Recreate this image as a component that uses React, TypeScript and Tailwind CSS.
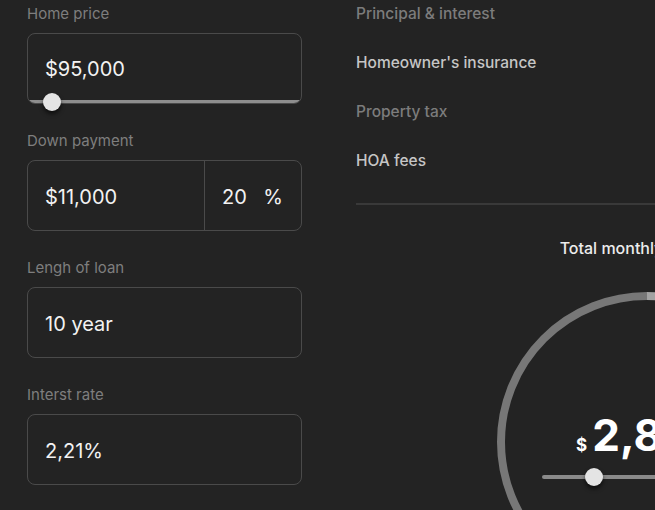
import React from "react";

const breakdown = [
  { label: "Principal & interest", tone: "text-[#7c7c7c]" },
  { label: "Homeowner's insurance", tone: "text-[#c6c6c6]" },
  { label: "Property tax", tone: "text-[#7c7c7c]" },
  { label: "HOA fees", tone: "text-[#c6c6c6]" },
];

function Field({ label, children }: { label: string; children: React.ReactNode }) {
  return (
    <div className="flex flex-col gap-[9px]">
      <span className="text-[15px] leading-[20px] text-[#7e7e7e]">{label}</span>
      {children}
    </div>
  );
}

function Box({ children }: { children: React.ReactNode }) {
  return (
    <div className="h-[71px] rounded-lg border border-[#4a4a4a] flex items-center px-[17px] pt-[3px] text-[20px] text-[#f2f2f2]">
      {children}
    </div>
  );
}

function Thumb() {
  return (
    <div className="w-[18px] h-[18px] rounded-full bg-[#e4e4e4] shadow-[0_3px_4px_rgba(0,0,0,0.6)]" />
  );
}

function Ring() {
  // donut made of payment segments
  const r = 146;
  const c = 2 * Math.PI * r;
  const segs = [
    { len: 0.28, color: "#a3a3a3" },
    { len: 0.12, color: "#5e5e5e" },
    { len: 0.1, color: "#8f8f8f" },
    { len: 0.5, color: "#777777" },
  ];
  let offset = 0;
  return (
    <svg width="300" height="300" viewBox="0 0 300 300" className="absolute inset-0">
      <g transform="rotate(-90 150 150)">
        {segs.map((s, i) => {
          const el = (
            <circle
              key={i}
              cx="150"
              cy="150"
              r={r}
              fill="none"
              stroke={s.color}
              strokeWidth="8"
              strokeDasharray={`${s.len * c} ${c}`}
              strokeDashoffset={-offset}
            />
          );
          offset += s.len * c;
          return el;
        })}
      </g>
    </svg>
  );
}

export default function App() {
  return (
    <div
      className="w-[655px] h-[510px] overflow-hidden bg-[#232323] text-white"
      style={{ fontFamily: "Inter, 'Liberation Sans', sans-serif" }}
    >
      <div className="flex gap-[54px] pl-[27px] pt-[4px]">
        {/* Inputs */}
        <div className="w-[275px] shrink-0 flex flex-col gap-[27px]">
          <Field label="Home price">
            <div className="relative">
              <div className="h-[71px] rounded-lg border border-[#4a4a4a] overflow-hidden relative flex items-center px-[17px] pt-[1px] text-[20px] text-[#f2f2f2]">
                <span>$95,000</span>
                <div className="absolute bottom-0 inset-x-0 h-[3px] bg-[#8e8e8e]" />
              </div>
              <div className="absolute left-[16px] bottom-[-7px]">
                <Thumb />
              </div>
            </div>
          </Field>

          <Field label="Down payment">
            <div className="h-[71px] rounded-lg border border-[#4a4a4a] flex text-[20px] text-[#f2f2f2]">
              <div className="w-[177px] border-r border-[#4a4a4a] flex items-center px-[17px] pt-[3px]">$11,000</div>
              <div className="flex-1 flex items-center justify-between pl-[17px] pr-[18px] pt-[3px]">
                <span>20</span>
                <span>%</span>
              </div>
            </div>
          </Field>

          <Field label="Lengh of loan">
            <Box>10 year</Box>
          </Field>

          <Field label="Interst rate">
            <Box>2,21%</Box>
          </Field>
        </div>

        {/* Summary */}
        <div className="w-[582px] shrink-0 flex flex-col">
          <div className="flex flex-col gap-[29px]">
            {breakdown.map((b) => (
              <span key={b.label} className={`text-[15.5px] leading-[20px] font-medium ${b.tone}`}>
                {b.label}
              </span>
            ))}
          </div>
          <div className="mt-[32px] h-[2px] bg-[#393939]" />
          <div className="mt-[33px] text-center text-[16px] leading-[20px] font-medium text-[#ececec]">
            Total monthly payment
          </div>
          <div className="mt-[34px] self-center relative w-[300px] h-[300px]">
            <Ring />
            <div className="relative flex flex-col items-center pt-[121px] pl-[2px]">
              <div className="flex items-baseline gap-[5px] font-bold">
                <span className="text-[17px]">$</span>
                <span className="text-[44px] leading-[44px]">2,845</span>
              </div>
              <div className="mt-[9px] relative w-[212px] h-[18px] flex items-center">
                <div className="w-full h-[4px] rounded-full bg-[#8a8a8a]" />
                <div className="absolute left-[43px] top-0">
                  <Thumb />
                </div>
              </div>
            </div>
          </div>
        </div>
      </div>
    </div>
  );
}
